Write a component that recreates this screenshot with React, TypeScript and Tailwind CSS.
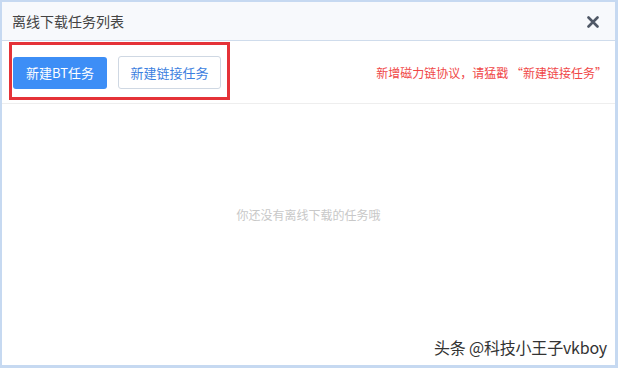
export default function App() {
  return (
    <div
      className="relative w-[618px] h-[368px] bg-white border-2 border-r-[3px] border-b-[3px] border-[#c6d9f1] flex flex-col overflow-hidden"
      style={{ fontFamily: '"Noto Sans CJK SC", "Noto Sans", sans-serif' }}
    >
      {/* header */}
      <div className="h-[39px] shrink-0 flex items-center justify-between pl-[10px] pr-[16px] bg-[#f7f9fc] border-b border-[#cfdcec]">
        <span className="text-[14px] text-[#444]">离线下载任务列表</span>
        <svg width="12" height="12" viewBox="0 0 12 12" className="mt-[1px]">
          <path d="M1.5 1.5 L10.5 10.5 M10.5 1.5 L1.5 10.5" stroke="#4f5866" strokeWidth="2.6" strokeLinecap="round" />
        </svg>
      </div>

      {/* toolbar */}
      <div className="relative h-[63px] shrink-0 flex items-center justify-between pl-[11px] pr-[8px] border-b border-[#eeeeee]">
        <div className="flex items-center gap-[11px] mt-[1px]">
          <button className="h-[32px] w-[94px] rounded-[3px] bg-[#3d8ef6] text-white text-[13px]">新建BT任务</button>
          <button className="h-[33px] w-[103px] rounded-[3px] bg-white border border-[#cfd8e3] text-[#3d7fe0] text-[13px]">
            新建链接任务
          </button>
        </div>
        <span className="text-[12px] text-[#f04848] mt-[1px]">新增磁力链协议，请猛戳 “新建链接任务”</span>
        {/* annotation frame */}
        <div className="absolute left-[7px] top-[1px] w-[221px] h-[58px] border-[3px] border-[#e53238] pointer-events-none" />
      </div>

      {/* empty state */}
      <div className="flex-1 flex items-start justify-center pt-[102px]">
        <span className="text-[12px] text-[#c8c8c8]">你还没有离线下载的任务哦</span>
      </div>

      {/* watermark */}
      <div className="absolute right-[8px] bottom-[6px] text-[16px] text-[#333] tracking-[-0.2px]">头条 @科技小王子vkboy</div>
    </div>
  );
}
